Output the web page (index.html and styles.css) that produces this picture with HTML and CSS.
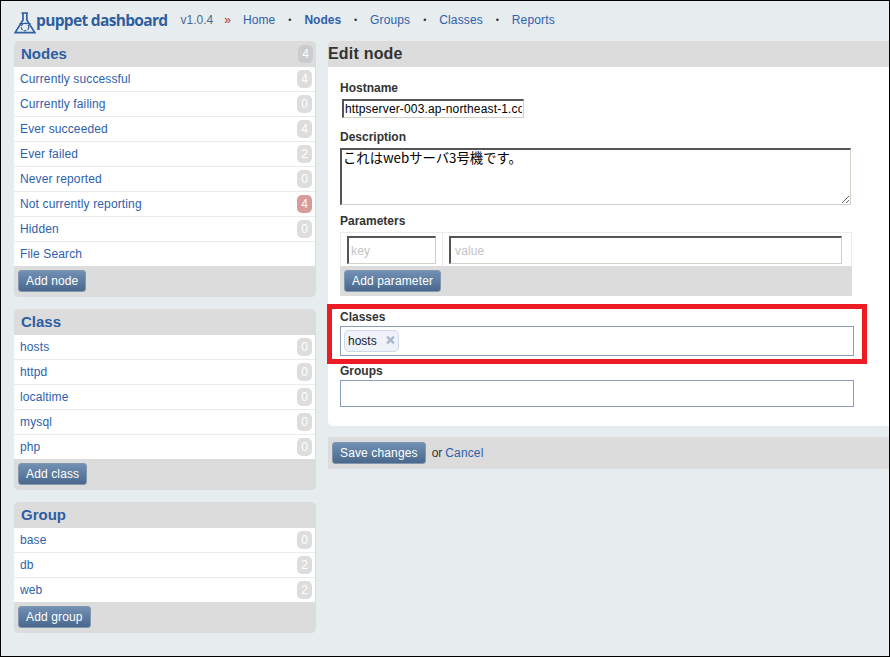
FILE: index.html
```html
<!DOCTYPE html>
<html lang="en">

<head>
    <meta charset="UTF-8">
    <meta name="viewport" content="width=device-width, initial-scale=1.0">
    <title>Edit node - puppet dashboard</title>
    <link rel="stylesheet" href="styles.css">
</head>

<body>
    <header class="topbar">
        <a class="logo" href="#">
            <svg class="logo-icon" width="22" height="22" viewBox="0 0 22 22" fill="none" stroke="#2f5f9e">
                <path d="M7.5 1h6.5M9 1v7L1.2 20.6h19.6L12.8 8V1" stroke-width="1.7"/>
                <circle cx="11" cy="15" r="3.8" stroke-width="1.2" stroke-dasharray="3 1.2"/>
                <path d="M5.5 11.5h11" stroke-width="1"/>
            </svg>
            <span class="logo-text">puppet dashboard</span>
        </a>
        <span class="version">v1.0.4</span>
        <span class="crumb">»</span>
        <nav class="nav">
            <a href="#">Home</a>
            <i>•</i>
            <a class="active" href="#">Nodes</a>
            <i>•</i>
            <a href="#">Groups</a>
            <i>•</i>
            <a href="#">Classes</a>
            <i>•</i>
            <a href="#">Reports</a>
        </nav>
    </header>

    <div class="layout">
        <aside class="sidebar">
            <section class="panel">
                <h2 class="panel-head">Nodes <span class="count">4</span></h2>
                <ul class="rows">
                    <li><a href="#">Currently successful</a><span class="count">4</span></li>
                    <li><a href="#">Currently failing</a><span class="count">0</span></li>
                    <li><a href="#">Ever succeeded</a><span class="count">4</span></li>
                    <li><a href="#">Ever failed</a><span class="count">2</span></li>
                    <li><a href="#">Never reported</a><span class="count">0</span></li>
                    <li><a href="#">Not currently reporting</a><span class="count alert">4</span></li>
                    <li><a href="#">Hidden</a><span class="count">0</span></li>
                    <li><a href="#">File Search</a></li>
                </ul>
                <div class="panel-foot"><a class="btn" href="#">Add node</a></div>
            </section>

            <section class="panel">
                <h2 class="panel-head">Class</h2>
                <ul class="rows">
                    <li><a href="#">hosts</a><span class="count">0</span></li>
                    <li><a href="#">httpd</a><span class="count">0</span></li>
                    <li><a href="#">localtime</a><span class="count">0</span></li>
                    <li><a href="#">mysql</a><span class="count">0</span></li>
                    <li><a href="#">php</a><span class="count">0</span></li>
                </ul>
                <div class="panel-foot"><a class="btn" href="#">Add class</a></div>
            </section>

            <section class="panel">
                <h2 class="panel-head">Group</h2>
                <ul class="rows">
                    <li><a href="#">base</a><span class="count">0</span></li>
                    <li><a href="#">db</a><span class="count">2</span></li>
                    <li><a href="#">web</a><span class="count">2</span></li>
                </ul>
                <div class="panel-foot"><a class="btn" href="#">Add group</a></div>
            </section>
        </aside>

        <main class="content">
            <h1 class="content-head">Edit node</h1>
            <form class="edit-form" action="#">
                <label class="field-label" for="hostname">Hostname</label>
                <input class="inset host-input" id="hostname" type="text" value="httpserver-003.ap-northeast-1.compute.amazonaws.com">

                <label class="field-label" for="description">Description</label>
                <textarea class="inset desc-input" id="description">これはwebサーバ3号機です。</textarea>

                <div class="field-label">Parameters</div>
                <div class="params">
                    <div class="param-row">
                        <div class="param-key"><input class="inset" type="text" placeholder="key"></div>
                        <div class="param-value"><input class="inset" type="text" placeholder="value"></div>
                    </div>
                    <div class="panel-foot"><a class="btn" href="#">Add parameter</a></div>
                </div>

                <div class="marked">
                    <div class="field-label">Classes</div>
                    <div class="token-box">
                        <span class="token">hosts <b class="token-x">×</b></span>
                    </div>
                    <span class="red-box"></span>
                </div>

                <div class="field-label groups-label">Groups</div>
                <div class="token-box groups-box"></div>
            </form>
            <div class="actions">
                <a class="btn" href="#">Save changes</a>
                <span class="or">or</span>
                <a class="cancel" href="#">Cancel</a>
            </div>
        </main>
    </div>
</body>

</html>
```

FILE: styles.css
```css
* {
    box-sizing: border-box;
}

html,
body {
    margin: 0;
    height: 100%;
}

body {
    border: 1px solid #000;
    background: #e7ecef;
    font-family: "Liberation Sans", Arial, sans-serif;
    font-size: 12px;
    color: #333;
    overflow: hidden;
}

a {
    letter-spacing: .13px;
    color: #2e61ab;
    text-decoration: none;
}

/* top bar */
.topbar {
    display: flex;
    align-items: center;
    height: 40px;
    padding: 0 0 3px 13px;
}

.logo {
    display: flex;
    align-items: center;
    letter-spacing: 0;
}

.logo-icon {
    margin-top: 7px;
}

.logo-text {
    font-family: "Open Sans", sans-serif;
    font-size: 15.5px;
    font-weight: 700;
    letter-spacing: -.67px;
    color: #2f5f9e;
}

.version {
    margin-left: 13px;
    color: #4d6a8c;
}

.crumb {
    margin-left: 11px;
    color: #a33;
}

.nav {
    display: flex;
    align-items: center;
    margin-left: 12px;
}

.nav i {
    width: 29px;
    font-style: normal;
    font-size: 9px;
    text-align: center;
    color: #333;
}

.nav .active {
    font-weight: bold;
    letter-spacing: 0;
}

/* columns */
.layout {
    display: flex;
    align-items: flex-start;
    padding-left: 13px;
}

.sidebar {
    width: 302px;
    flex: none;
}

.panel {
    margin-bottom: 12px;
    border-radius: 5px;
    background: #dcdcdc;
    overflow: hidden;
}

.panel-head {
    display: flex;
    align-items: center;
    justify-content: space-between;
    height: 26px;
    margin: 0;
    padding: 0 3px 2px 7px;
    font-size: 15px;
    color: #2d5ea3;
}

.rows {
    margin: 0 1px 0 0;
    padding: 0;
    list-style: none;
    background: #fff;
}

.rows li {
    display: flex;
    align-items: center;
    justify-content: space-between;
    height: 25px;
    padding: 0 3px 0 6px;
    border-bottom: 1px solid #e7ecef;
}

.rows li:last-child {
    height: 24px;
    border-bottom: 0;
}

.count {
    width: 15px;
    height: 18px;
    border-radius: 5px;
    background: #ddd;
    font-size: 12px;
    font-weight: normal;
    line-height: 18px;
    text-align: center;
    color: #fff;
}

.panel-head .count {
    margin-top: 2px;
    background: #ccc;
}

.count.alert {
    background: #d99a9a;
}

.panel-foot {
    display: flex;
    height: 31px;
    padding: 4px;
    background: #dcdcdc;
}

.btn {
    display: inline-block;
    height: 22px;
    padding: 0 7px;
    border: 1px solid #8197ad;
    border-radius: 3px;
    background: linear-gradient(#7190b3, #49688c);
    line-height: 20px;
    color: #fff;
}

/* edit form */
.content {
    flex: 1;
    margin-left: 12px;
}

.content-head {
    height: 26px;
    margin: 0;
    border-radius: 5px 0 0 0;
    background: #dcdcdc;
    font-size: 16px;
    letter-spacing: .2px;
    line-height: 26px;
    color: #333;
}

.edit-form {
    display: block;
    height: 359px;
    padding: 14px 0 0 12px;
    border-radius: 0 0 0 5px;
    background: #fff;
}

.field-label {
    display: block;
    height: 15px;
    font-weight: bold;
    line-height: 15px;
}

.inset {
    display: block;
    border: solid;
    border-color: #555 #d4d0c8 #d4d0c8 #555;
    border-width: 2px 1px 1px 2px;
    background: #fff;
    font-family: "Liberation Sans", Arial, sans-serif;
    font-size: 12px;
    letter-spacing: .15px;
    color: #000;
    outline: 0;
}

.inset::placeholder {
    color: #c4c4c4;
}

.host-input {
    width: 182px;
    height: 19px;
    margin: 3px 0 12px 2px;
    padding: 0 1px;
}

.desc-input {
    width: 511px;
    height: 57px;
    margin: 3px 0 9px;
    padding: 0 1px;
    font-family: "Noto Sans CJK JP", sans-serif;
    font-size: 13.33px;
    letter-spacing: 0;
    line-height: 15px;
}

.params {
    width: 512px;
    margin: 3px 0 0;
    border: 1px solid #e7ecef;
    border-bottom: 0;
}

.param-row {
    display: flex;
    height: 33px;
}

.param-key {
    width: 102px;
    padding: 3px 6px 0;
    border-right: 1px solid #e7ecef;
}

.param-value {
    flex: 1;
    padding: 3px 9px 0 6px;
}

.param-row .inset {
    width: 100%;
    height: 28px;
    padding: 0 4px;
}

.param-key .inset {
    padding: 0 2px;
}

.params .panel-foot {
    height: 30px;
    margin: 0 -1px;
}

.marked {
    position: relative;
    margin-top: 14px;
}

.marked .field-label {
    height: 14px;
}

.token-box {
    width: 514px;
    height: 30px;
    margin-top: 2px;
    padding: 3px;
    border: 1px solid #8a9dbd;
    background: #fff;
}

.token {
    display: inline-block;
    height: 22px;
    padding: 0 3px 0 3px;
    border: 1px solid #cdd8ea;
    border-radius: 5px;
    background: #eff2f8;
    line-height: 20px;
    color: #1a1a2e;
}

.token-x {
    margin-left: 6px;
    font-size: 15px;
    line-height: 18px;
    color: #a9b3cc;
    -webkit-text-stroke: .5px #a9b3cc;
}

.red-box {
    position: absolute;
    left: -13px;
    top: -6px;
    width: 540px;
    height: 60px;
    border: 5px solid #ed1c24;
    pointer-events: none;
}

.groups-label {
    margin-top: 8px;
}

.groups-box {
    height: 27px;
    margin-top: 1px;
}

.actions {
    display: flex;
    align-items: center;
    height: 32px;
    margin-top: 11px;
    padding-left: 4px;
    background: #dcdcdc;
}

.or {
    margin-left: 6px;
    margin-right: 3px;
}
```
